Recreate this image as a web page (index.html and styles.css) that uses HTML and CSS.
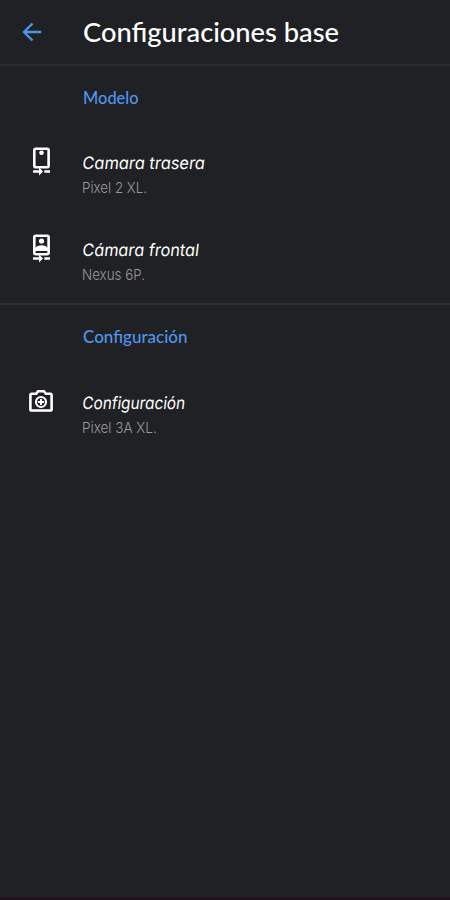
FILE: index.html
```html
<!DOCTYPE html>
<html lang="es">
<head>
<meta charset="utf-8">
<title>Configuraciones base</title>
<link rel="stylesheet" href="styles.css">
</head>
<body>
<header class="bar">
  <svg class="back" viewBox="0 0 20 20"><path d="M19.300 10H2.500M10.500 1.500L2 10l8.500 8.500"/></svg>
  <h1><span class="t-main">Configuraciones base</span></h1>
</header>
<main>
  <section class="group">
    <h2><span class="t-modelo">Modelo</span></h2>
    <div class="row">
      <svg class="icon" viewBox="0 0 18 30"><rect class="line" x="1.300" y="1.800" width="14.300" height="18.400" rx="1.500"/><circle cx="8.500" cy="5.800" r="2.300"/><path d="M0 23.300h6v-2.800l4 4-4 4v-2.800H0zM11.300 23.300h5.700v2.400h-5.700z"/></svg>
      <div><h3><span class="t-rear">Camara trasera</span></h3><p><span class="s-rear">Pixel 2 XL.</span></p></div>
    </div>
    <div class="row">
      <svg class="icon" viewBox="0 0 18 30"><rect class="line" x="1.300" y="1.800" width="14.300" height="18.400" rx="1.500"/><circle cx="8.500" cy="7" r="2.600"/><path d="M2 17v-2.500c1-2.500 4-3.300 6.500-3.300s5.500.8 6.500 3.300V17zM0 23.300h6v-2.800l4 4-4 4v-2.800H0zM11.300 23.300h5.700v2.400h-5.700z"/></svg>
      <div><h3><span class="t-front">Cámara frontal</span></h3><p><span class="s-front">Nexus 6P.</span></p></div>
    </div>
  </section>
  <section class="group second">
    <h2><span class="t-group">Configuración</span></h2>
    <div class="row">
      <svg class="camera" viewBox="0 0 24 22"><path class="line" d="M2.700 3.700h4.500L9 1.300h6l1.800 2.400h4.500q1.300 0 1.300 1.300v14.200q0 1.300-1.300 1.300H2.700q-1.300 0-1.300-1.300V5q0-1.300 1.300-1.300z"/><circle class="ring" cx="12" cy="12" r="5"/><path class="plus" d="M12 9v6M9 12h6"/></svg>
      <div><h3><span class="t-config">Configuración</span></h3><p><span class="s-config">Pixel 3A XL.</span></p></div>
    </div>
  </section>
</main>
</body>
</html>
```
FILE: styles.css
```css
* { box-sizing: border-box; margin: 0; }
body {
  height: 900px;
  background: #202124;
  border-bottom: 3px solid #20151f;
  color: #fff;
  font-family: Lato, sans-serif;
}
.bar { display: flex; height: 66px; border-bottom: 2px solid #2c2d30; }
.back { width: 20px; height: 20px; margin: 22px 40px 0 22px; fill: none; stroke: #5094ed; stroke-width: 2.300; }
h1, h2, h3, p { white-space: nowrap; }
span { display: inline-block; transform-origin: 0 70%; }
h1 { font-size: 27px; line-height: 64px; font-weight: 500; padding-left: 1px; }
.t-main { transform: scaleX(1.010); }
.group { height: 239px; border-bottom: 2px solid #2c2d30; }
.second { border: 0; }
h2 { height: 62px; padding: 20px 0 0 83px; font-size: 17px; line-height: 24px; font-weight: 500; color: #5094ed; }
.t-modelo { transform: scaleX(.965); }
.row { display: flex; height: 87px; padding-top: 19px; }
.icon { width: 18px; height: 30px; margin-left: 33px; margin-right: 31px; fill: #fff; }
.line { fill: none; stroke: #fff; stroke-width: 2.600; }
.camera { width: 24px; height: 22px; margin: 6px 29px 0 29px; fill: none; }
.ring { stroke: #fff; stroke-width: 2.200; }
.plus { stroke: #fff; stroke-width: 2; }
h3 { margin-top: 4px; font: 400 17px/24px Inter, sans-serif; font-feature-settings: "cv11"; }
p { margin-top: 2px; font: 300 15px/22px Inter, sans-serif; color: #98999c; }
.t-rear { transform: skewX(-7deg) scaleX(.965); }
.t-front { transform: skewX(-7deg) scaleX(.955); }
.t-config { transform: skewX(-7deg) scaleX(.9); }
.s-rear { transform: scaleX(.89); }
.s-front { transform: scaleX(.89); }
.s-config { transform: scaleX(.9); }
.second h2 { height: 60px; }
.second h3 { margin-top: 7px; }
```
